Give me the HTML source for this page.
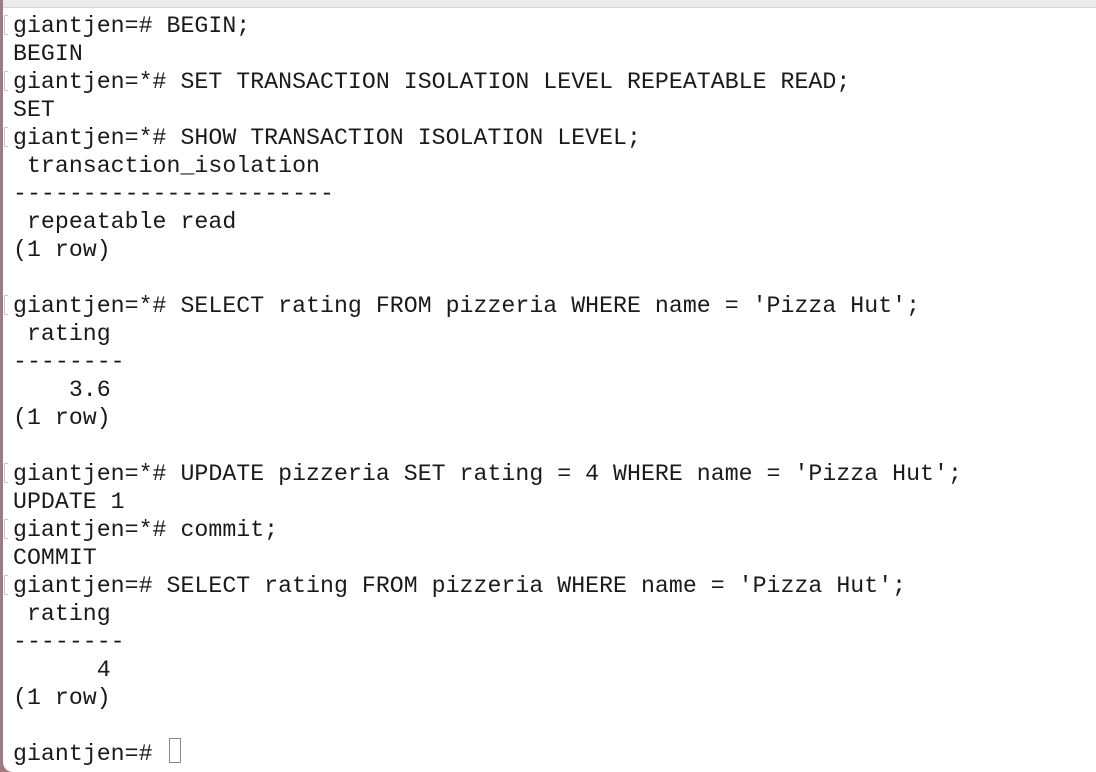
<!DOCTYPE html>
<html><head><meta charset="utf-8"><style>
html,body{margin:0;padding:0;}
body{width:1096px;height:772px;position:relative;overflow:hidden;background:#a07a7e;}
#win{position:absolute;left:3px;top:0;width:1093px;height:772px;background:#fff;border-bottom-left-radius:10px;overflow:hidden;}
#bar{position:absolute;left:0;top:0;width:100%;height:7px;background:#ececec;border-bottom:1px solid #d6d6d6;}
pre{position:absolute;left:10px;top:12px;margin:0;font-family:"Liberation Mono",monospace;font-size:23.2px;line-height:28px;color:#1a1a1a;letter-spacing:0.04px;}
.b{position:absolute;left:1px;width:4px;height:20px;border:1.5px solid #c8c8c8;border-right:none;box-sizing:border-box;}
#cur{position:absolute;left:166px;top:738px;width:12px;height:25px;border:1.5px solid #888;box-sizing:border-box;}
</style></head><body>
<div id="win">
<div id="bar"></div>
<div class="b" style="top:15px"></div>
<div class="b" style="top:71px"></div>
<div class="b" style="top:127px"></div>
<div class="b" style="top:295px"></div>
<div class="b" style="top:463px"></div>
<div class="b" style="top:519px"></div>
<div class="b" style="top:575px"></div>
<pre>giantjen=# BEGIN;
BEGIN
giantjen=*# SET TRANSACTION ISOLATION LEVEL REPEATABLE READ;
SET
giantjen=*# SHOW TRANSACTION ISOLATION LEVEL;
 transaction_isolation
-----------------------
 repeatable read
(1 row)

giantjen=*# SELECT rating FROM pizzeria WHERE name = 'Pizza Hut';
 rating
--------
    3.6
(1 row)

giantjen=*# UPDATE pizzeria SET rating = 4 WHERE name = 'Pizza Hut';
UPDATE 1
giantjen=*# commit;
COMMIT
giantjen=# SELECT rating FROM pizzeria WHERE name = 'Pizza Hut';
 rating
--------
      4
(1 row)

giantjen=# </pre>
<div id="cur"></div>
</div>
</body></html>
